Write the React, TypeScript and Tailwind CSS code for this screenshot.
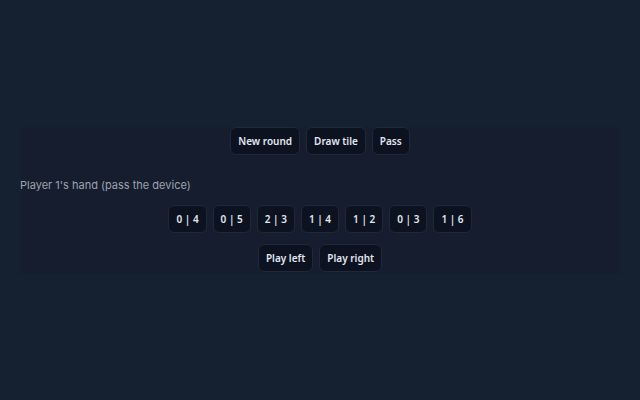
import React from 'react'

const tiles = ['0 | 4', '0 | 5', '2 | 3', '1 | 4', '1 | 2', '0 | 3', '1 | 6']

function Btn({ children }: { children: React.ReactNode }) {
  return (
    <button className="h-7 px-[7px] rounded-md border border-[#1f2939] bg-[#0d1220] text-[10px] font-semibold text-[#e2e8f0] leading-none">
      {children}
    </button>
  )
}

export default function App() {
  return (
    <div className="min-h-screen bg-[#152131] flex items-center" style={{ fontFamily: '"Noto Sans", sans-serif' }}>
      <div className="mx-5 w-full bg-[#161d2e] pb-[2px]">
        <div className="flex justify-center gap-[6px]">
          <Btn>New round</Btn>
          <Btn>Draw tile</Btn>
          <Btn>Pass</Btn>
        </div>
        <p className="mt-[21px] mb-[11px] text-[11px] leading-[18px] text-[#9ca3af] font-['Inter',sans-serif]">
          Player 1's hand (pass the device)
        </p>
        <div className="flex justify-center gap-[6px]">
          {tiles.map((t) => (
            <Btn key={t}>{t}</Btn>
          ))}
        </div>
        <div className="mt-[11px] flex justify-center gap-[6px]">
          <Btn>Play left</Btn>
          <Btn>Play right</Btn>
        </div>
      </div>
    </div>
  )
}
